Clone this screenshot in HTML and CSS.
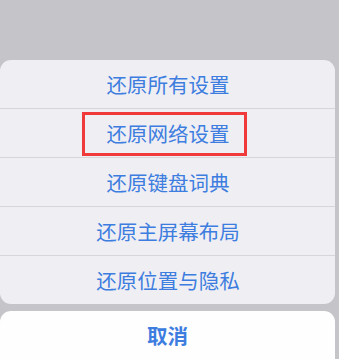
FILE: index.html
```html
<!DOCTYPE html>
<html lang="zh-CN">
<head>
<meta charset="utf-8">
<link rel="stylesheet" href="styles.css">
</head>
<body>
<div class="screen">
  <div class="sheet">
    <div class="row">还原所有设置</div>
    <div class="row highlighted">还原网络设置<span class="mark"></span></div>
    <div class="row">还原键盘词典</div>
    <div class="row">还原主屏幕布局</div>
    <div class="row">还原位置与隐私</div>
  </div>
  <div class="cancel">取消</div>
</div>
</body>
</html>
```
FILE: styles.css
```css
html, body {
  margin: 0;
  padding: 0;
  background: #c5c5c9;
  overflow: hidden;
}
.screen {
  width: 339px;
  height: 359px;
  padding: 60px 4px 0 0;
  box-sizing: border-box;
  display: flex;
  flex-direction: column;
  gap: 7px;
  font-family: "Noto Sans CJK SC", "Noto Sans", sans-serif;
}
.sheet {
  background: #efeff3;
  border-radius: 11px;
  display: flex;
  flex-direction: column;
  gap: 1px;
  overflow: hidden;
  background-clip: padding-box;
}
.sheet .row + .row {
  box-shadow: 0 -1px 0 #d6d6da;
}
.row {
  height: 48px;
  display: flex;
  align-items: center;
  justify-content: center;
  color: #3d7ddf;
  font-size: 20.5px;
  position: relative;
  padding-left: 1px;
}
.mark {
  position: absolute;
  left: 82px;
  top: 3px;
  width: 165px;
  height: 44px;
  border: 3px solid #f0393b;
  box-sizing: border-box;
}
.cancel {
  flex: 1;
  background: #fefefe;
  border-radius: 11px 11px 0 0;
  display: flex;
  align-items: flex-start;
  justify-content: center;
  padding-top: 9px;
  color: #3d7ddf;
  font-size: 20.5px;
  font-weight: bold;
}
```
